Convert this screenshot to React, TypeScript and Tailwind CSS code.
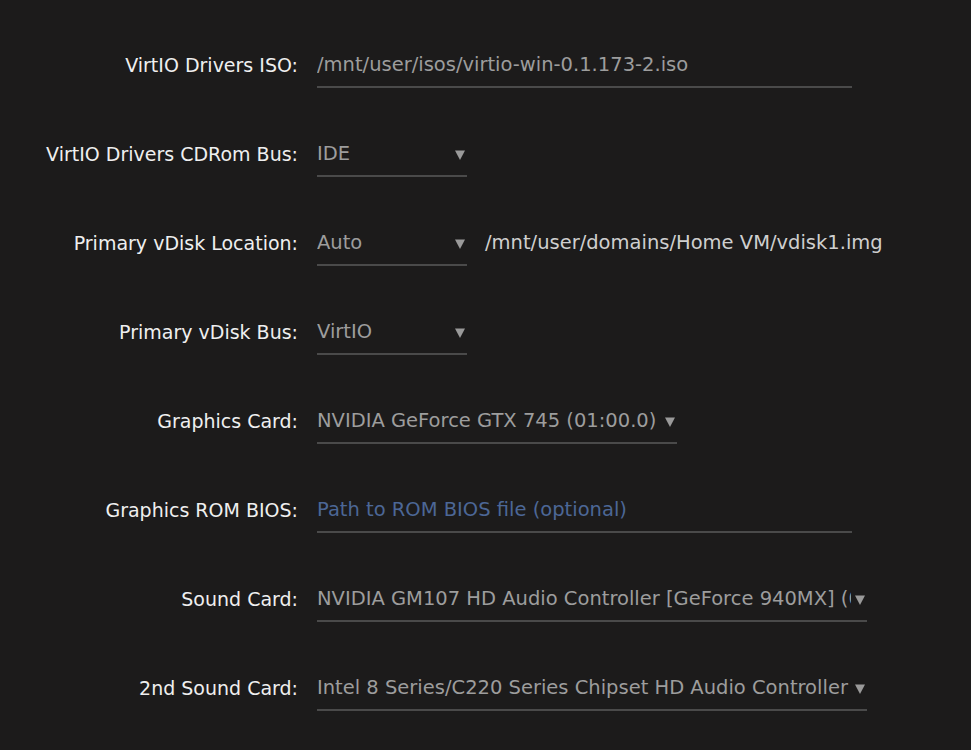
import React from 'react';

const font = { fontFamily: '"DejaVu Sans", "Noto Sans", sans-serif' };

function Caret() {
  return (
    <svg width="10" height="10" viewBox="0 0 10 10" className="absolute right-[2px] top-[8px]">
      <path d="M0 0.5 H10 L5 10 Z" fill="#9a9a9a" />
    </svg>
  );
}

function Row({ label, children }: { label: string; children: React.ReactNode }) {
  return (
    <div className="flex items-start">
      <div className="w-[298px] shrink-0 text-right text-[19px] leading-[24px] text-[#efefef]">{label}</div>
      <div className="ml-[19px] flex items-start">{children}</div>
    </div>
  );
}

function TextInput({ value, placeholder, width }: { value?: string; placeholder?: string; width: string }) {
  return (
    <div className={`${width} border-b-2 border-[#4a4a4a] pb-[9px] leading-[24px] whitespace-nowrap overflow-hidden`}>
      {value ? (
        <span className="text-[#9d9d9d]">{value}</span>
      ) : (
        <span className="text-[#4c6796]">{placeholder}</span>
      )}
    </div>
  );
}

function Select({ value, width }: { value: string; width: string }) {
  return (
    <div className={`${width} relative border-b-2 border-[#4a4a4a] pb-[9px] leading-[24px]`}>
      <div className="mr-[16px] whitespace-nowrap overflow-hidden text-[#9d9d9d]">{value}</div>
      <Caret />
    </div>
  );
}

export default function App() {
  return (
    <div className="min-h-[750px] w-full bg-[#1c1b1b] pt-[53px] text-[19.5px]" style={font}>
      <div className="flex flex-col gap-[54px]">
        <Row label="VirtIO Drivers ISO:">
          <TextInput value="/mnt/user/isos/virtio-win-0.1.173-2.iso" width="w-[535px]" />
        </Row>
        <Row label="VirtIO Drivers CDRom Bus:">
          <Select value="IDE" width="w-[150px]" />
        </Row>
        <Row label="Primary vDisk Location:">
          <Select value="Auto" width="w-[150px]" />
          <div className="ml-[18px] leading-[24px] text-[#cfcfcf] whitespace-nowrap">/mnt/user/domains/Home VM/vdisk1.img</div>
        </Row>
        <Row label="Primary vDisk Bus:">
          <Select value="VirtIO" width="w-[150px]" />
        </Row>
        <Row label="Graphics Card:">
          <Select value="NVIDIA GeForce GTX 745 (01:00.0)" width="w-[360px]" />
        </Row>
        <Row label="Graphics ROM BIOS:">
          <TextInput placeholder="Path to ROM BIOS file (optional)" width="w-[535px]" />
        </Row>
        <Row label="Sound Card:">
          <Select value="NVIDIA GM107 HD Audio Controller [GeForce 940MX] (01:00.1)" width="w-[550px]" />
        </Row>
        <Row label="2nd Sound Card:">
          <Select value="Intel 8 Series/C220 Series Chipset HD Audio Controller" width="w-[550px]" />
        </Row>
      </div>
    </div>
  );
}
